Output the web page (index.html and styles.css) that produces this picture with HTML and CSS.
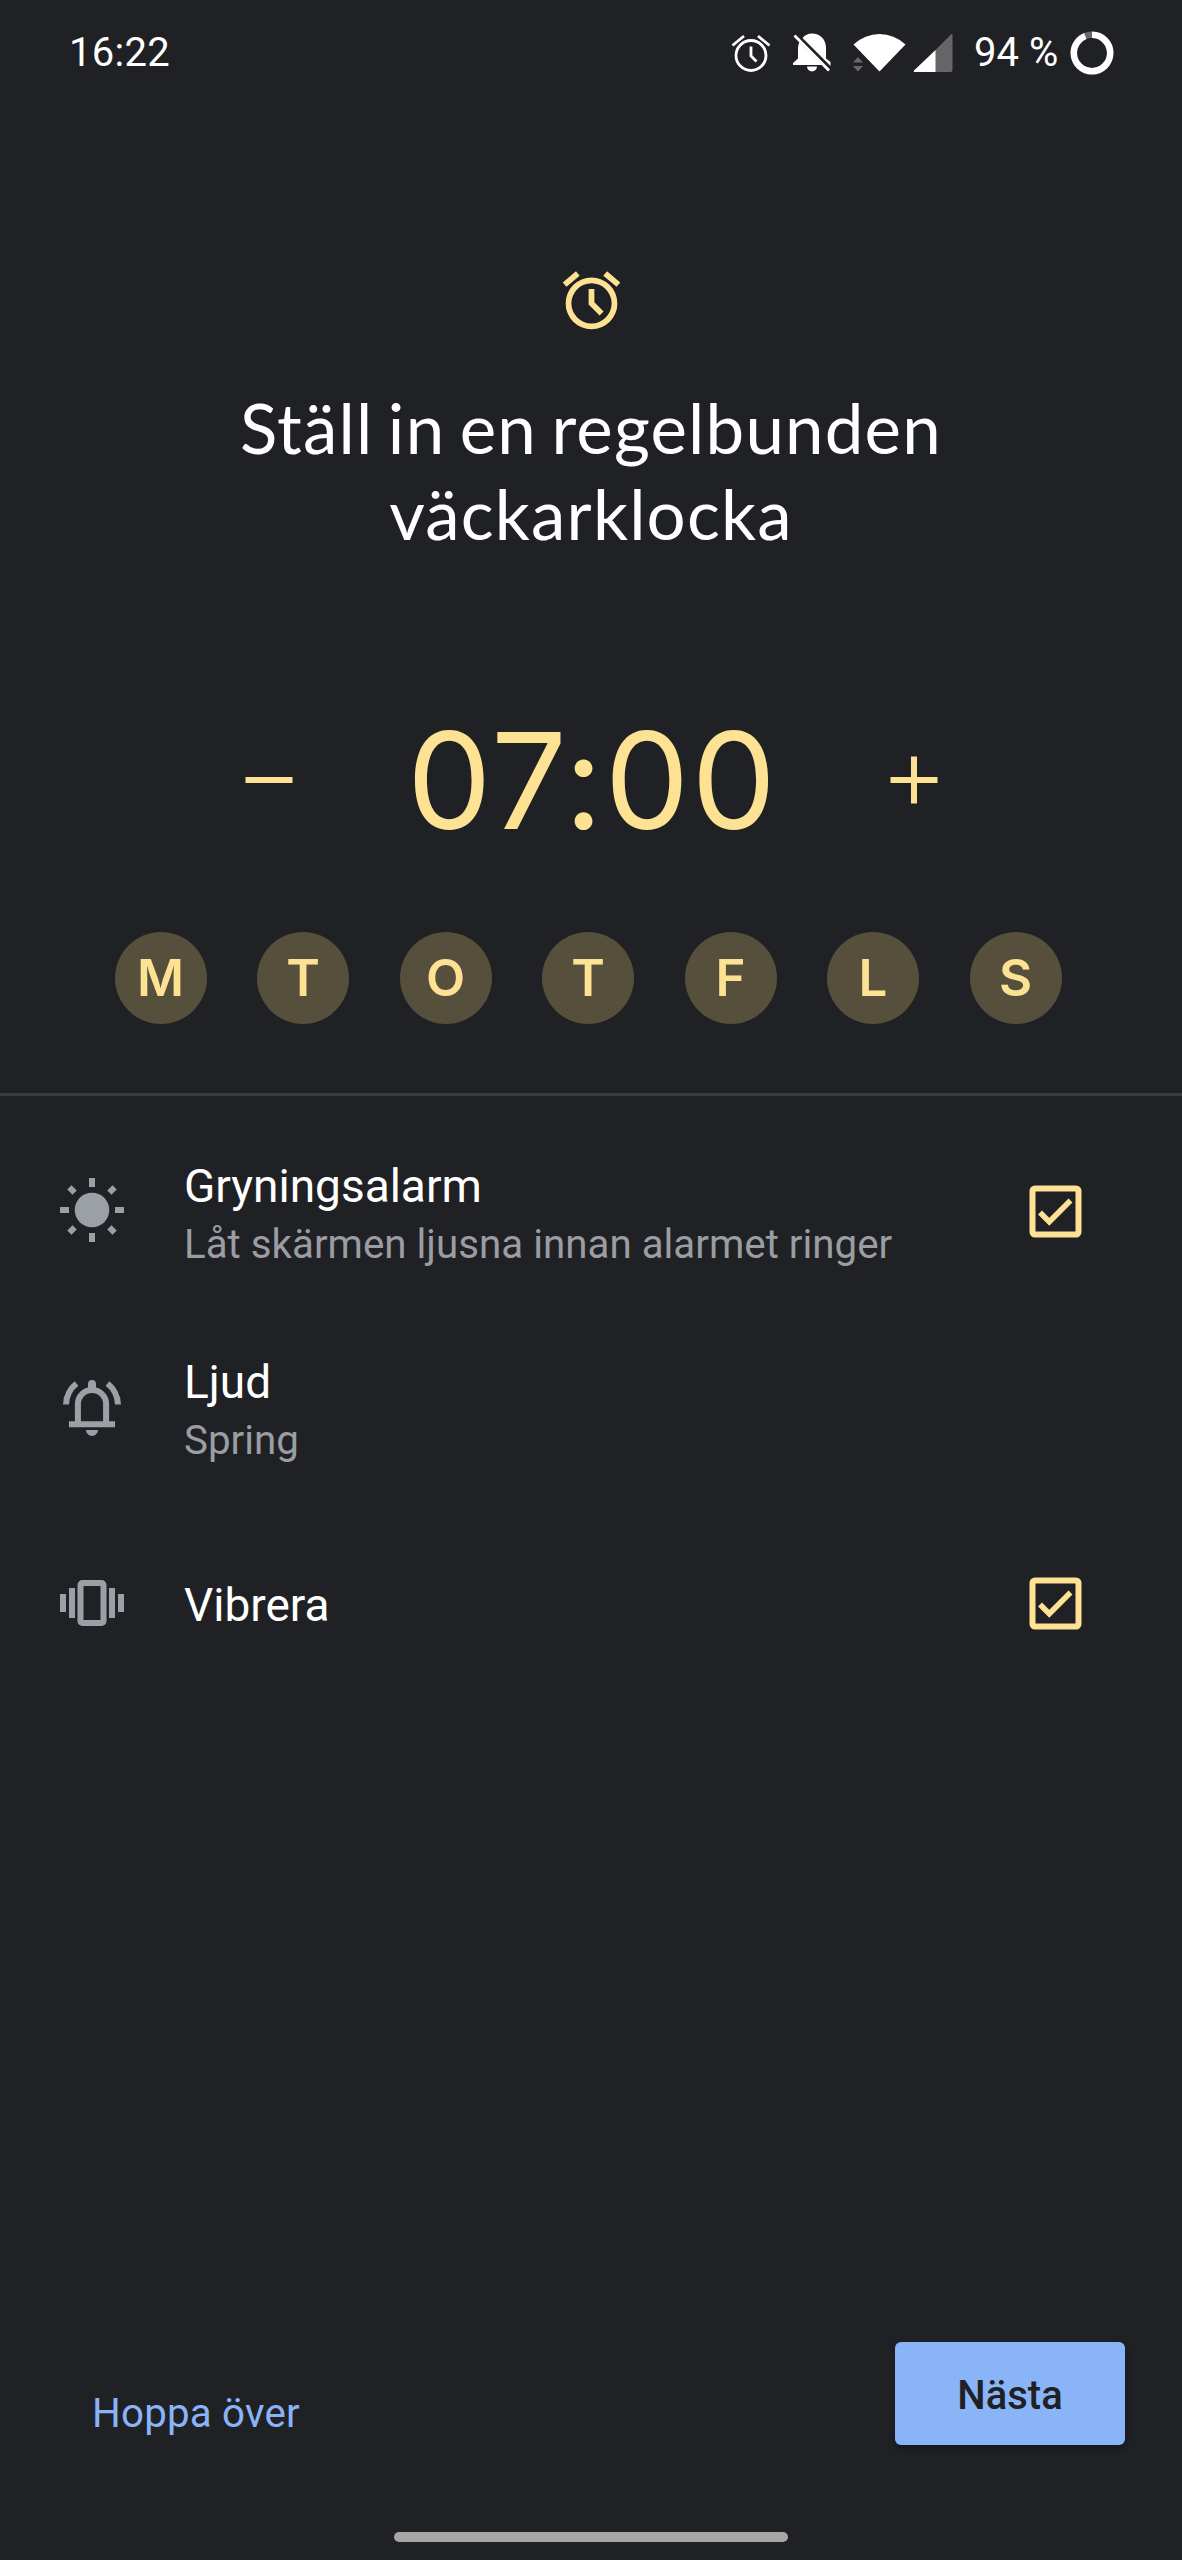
FILE: index.html
```
<!DOCTYPE html>
<html lang="sv">
  <head>
    <meta charset="utf-8">
    <title>Väckarklocka</title>
    <link rel="stylesheet" href="styles.css">
  </head>
<body>

  <header class="statusbar">
    <span class="clock">16:22</span>
    <svg class="st-alarm" width="40" height="40" viewBox="0 0 40 40" fill="none" stroke="#fff" stroke-width="2.8">
      <circle cx="20" cy="22.5" r="15"/>
      <path d="M20 13.5V23l5.5 5.5M1.500 12.500L13 3M27 3l11.500 9.500"/>
    </svg>
    <svg class="st-bell" width="40" height="40" viewBox="0 0 40 40">
      <path fill="#fff" d="M20 .5c-4 0-7 1.700-9.500 4.500L38.500 33v-4L34 25.500V15C34 6 28 .5 20 .5zM7.500 9C6.500 11 6 13.200 6 15.500v10L1 30v2h29zM15 33.500a5 5 0 0 0 10 0z"/>
      <path fill="none" stroke="#fff" stroke-width="2.800" d="M2.500 2.500L37 37.500"/>
    </svg>
    <svg class="st-wifi" width="54" height="40" viewBox="0 0 54 40">
      <path fill="#fff" d="M27.500 38.500L1.500 11.500Q13 1 27.500 1T53.500 11.500z"/>
      <path fill="#69696c" d="M1 29.500l5-5.500 5 5.500zM1 33h10l-5 5.500z"/>
    </svg>
    <svg class="st-signal" width="40" height="40" viewBox="0 0 40 40">
      <path fill="#666669" d="M22 17.500L38.500 1q1-.5 1 1v35q0 2-2 2H22z"/>
      <path fill="#fff" d="M22.500 17v22H2q-2 0-1-1.500z"/>
    </svg>
    <span class="percent">94 %</span>
    <svg class="st-battery" width="44" height="44" viewBox="0 0 44 44" fill="none" stroke-width="6.500">
      <circle cx="22" cy="22" r="18.200" stroke="#69696c"/>
      <circle cx="22" cy="22" r="18.200" stroke="#fff" pathLength="100" stroke-dasharray="94 6" transform="rotate(-90 22 22)"/>
    </svg>
  </header>

  <main>
    <svg class="alarm-icon" width="69" height="69" viewBox="0 0 24 24" fill="#fde293">
      <path d="M22 5.720l-4.600-3.860-1.290 1.530 4.600 3.860zM7.880 3.390L6.600 1.860 2 5.710l1.290 1.530zM12 4a9 9 0 1 0 0 18 9 9 0 0 0 0-18zm0 16a7 7 0 1 1 0-14 7 7 0 0 1 0 14z"/>
      <path d="M11 8h2v4.600l3.200 3.200-1.400 1.400-3.800-3.800z"/>
    </svg>

    <h1>Ställ in en regelbunden<br>väckarklocka</h1>

    <div class="time">
      <svg width="48" height="48" viewBox="0 0 48 48" stroke="#fde293" stroke-width="6"><path d="M.5 24h47"/></svg>
      <span class="digits">07:00</span>
      <svg width="48" height="48" viewBox="0 0 48 48" stroke="#fde293" stroke-width="6"><path d="M.5 24h47M24 .5v47"/></svg>
    </div>

    <div class="days">
      <span>M</span>
      <span>T</span>
      <span>O</span>
      <span>T</span>
      <span>F</span>
      <span>L</span>
      <span>S</span>
    </div>
  </main>

  <section class="options">
    <div class="row">
      <svg class="icon" width="64" height="66" viewBox="-32 -32 64 66" fill="#9aa0a6">
        <circle r="17.300"/>
        <path d="M-3-32h6v9h-6zM-3 23h6v9h-6zM-32-3h9v6h-9zM23-3h9v6h-9z"/>
        <path transform="rotate(45)" d="M-3-32h6v7.500h-6zM-3 24.500h6v7.500h-6zM-32-3h7.500v6h-7.500zM24.500-3h7.500v6h-7.500z"/>
      </svg>
      <div class="text">
        <div class="title">Gryningsalarm</div>
        <div class="sub">Låt skärmen ljusna innan alarmet ringer</div>
      </div>
      <svg class="check" width="53" height="53" viewBox="0 0 53 53" fill="none" stroke="#fde293" stroke-width="6">
        <rect x="3.500" y="3.500" width="46" height="46" rx="2.500"/>
        <path stroke-width="5.500" d="M11 27.500l9.300 9.300L41.500 15.500"/>
      </svg>
    </div>
    <div class="row">
      <svg class="icon" width="64" height="64" viewBox="0 0 64 64">
        <g fill="none" stroke="#9aa0a6" stroke-width="6">
          <path d="M17.900 49V29a14.100 14.100 0 0 1 28.200 0v20M9 49.200h46"/>
          <path d="M6 29.500Q6.500 16.500 16.500 8.500M58 29.500Q57.500 16.500 47.500 8.500"/>
        </g>
        <path fill="#9aa0a6" d="M28 13v-4a4 4 0 0 1 8 0v4zM26 55h12a6 6 0 0 1-12 0z"/>
      </svg>
      <div class="text">
        <div class="title">Ljud</div>
        <div class="sub">Spring</div>
      </div>
    </div>
    <div class="row">
      <svg class="icon" width="64" height="64" viewBox="0 0 64 64" fill="#9aa0a6">
        <path d="M0 23h6v18H0zM9 17h6v30H9zM49 17h6v30h-6zM58 23h6v18h-6z"/>
        <rect x="20.500" y="12" width="23" height="40" rx="2" fill="none" stroke="#9aa0a6" stroke-width="6"/>
      </svg>
      <div class="text single">
        <div class="title">Vibrera</div>
      </div>
      <svg class="check" width="53" height="53" viewBox="0 0 53 53" fill="none" stroke="#fde293" stroke-width="6">
        <rect x="3.500" y="3.500" width="46" height="46" rx="2.500"/>
        <path stroke-width="5.500" d="M11 27.500l9.300 9.300L41.500 15.500"/>
      </svg>
    </div>
  </section>

  <footer>
    <a class="skip">Hoppa över</a>
    <button class="next">Nästa</button>
  </footer>
  <div class="handle"></div>

</body>
</html>
```
FILE: styles.css
```
* { box-sizing: border-box; }

body {
  margin: 0;
  width: 1182px;
  height: 2560px;
  display: flex;
  flex-direction: column;
  background: #202124;
  color: #fff;
  font-family: Roboto, sans-serif;
}

svg { display: block; flex: none; }

.statusbar {
  display: flex;
  align-items: center;
  height: 105px;
  padding: 0 68px 0 69px;
  font-size: 40px;
  line-height: 48px;
}
.clock { margin-right: auto; letter-spacing: .3px; }
.st-bell { margin-left: 21px; }
.st-wifi { margin-left: 20px; }
.st-signal { margin-left: 7px; }
.percent { margin-left: 21px; width: 83px; white-space: nowrap; }
.st-battery { margin-left: 13px; }

main {
  height: 988px;
  display: flex;
  flex-direction: column;
  align-items: center;
}
.alarm-icon { margin-top: 161px; }

h1 {
  margin: 50px 0 0;
  font: 400 69px/86px Lato, sans-serif;
  letter-spacing: 1.200px;
  word-spacing: -4.500px;
  text-align: center;
}

.time {
  display: flex;
  align-items: center;
  justify-content: space-between;
  width: 694px;
  height: 160px;
  margin: 143px 0 0 1px;
  color: #fde293;
}
.digits {
  font: 400 134px/160px Inter, sans-serif;
  font-feature-settings: "calt" 0;
  letter-spacing: 2px;
  margin-right: -2px;
}

.days {
  display: flex;
  gap: 50.500px;
  margin: 72px 6px 0 0;
}
.days span {
  width: 92px;
  height: 92px;
  border-radius: 50%;
  background: #554f3c;
  color: #fde293;
  font: 600 51px/92px Inter, sans-serif;
  text-align: center;
}

.options {
  flex: 1;
  border-top: 3px solid #3a3b3f;
  padding-top: 17px;
}
.row {
  display: flex;
  align-items: center;
  height: 196px;
  padding: 0 100px 0 60px;
}
.text { flex: 1; margin-left: 60px; padding-top: 9px; }
.text.single { padding-top: 4px; }
.title { font-size: 46px; line-height: 56px; }
.sub {
  margin-top: 3px;
  font-size: 40.300px;
  line-height: 56px;
  color: #9a9da2;
}

footer {
  display: flex;
  justify-content: space-between;
  height: 190px;
  padding: 0 57px 0 92px;
}
.skip {
  padding-top: 48px;
  font-size: 40.300px;
  line-height: 48px;
  letter-spacing: .2px;
  color: #8ab4f8;
}
.next {
  width: 230px;
  height: 103px;
  padding: 3px 0 0;
  border: 0;
  border-radius: 6px;
  background: #8ab4f8;
  color: #202124;
  font: 500 40px Roboto, sans-serif;
  box-shadow: 0 3px 6px rgba(0,0,0,.35);
}

.handle {
  width: 394px;
  height: 10px;
  margin: 0 auto 18px;
  border-radius: 5px;
  background: #a6a6a6;
}
```
